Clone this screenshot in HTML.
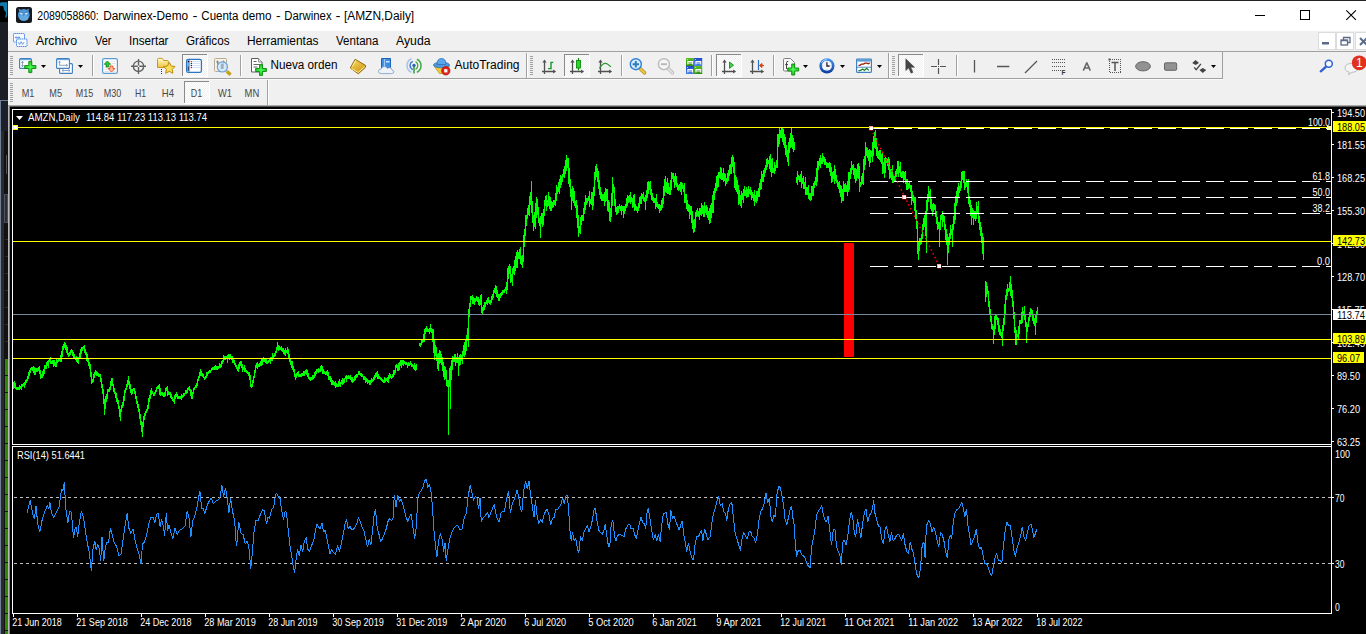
<!DOCTYPE html>
<html><head><meta charset="utf-8"><title>MT4</title>
<style>
*{box-sizing:border-box;margin:0;padding:0}
html,body{width:1366px;height:634px;overflow:hidden;background:#000}
body{position:relative;font-family:"Liberation Sans",sans-serif;font-size:12px;color:#000}
.abs{position:absolute}
#left{left:0;top:0;width:8px;height:634px;background:#1b1c1f}
#title{left:8px;top:0;width:1358px;height:31px;background:#fff;border-top:1px solid #222}
#menu{left:8px;top:31px;width:1358px;height:21px;background:#f0f0f0;border-bottom:1px solid #a0a0a0}
#tb{left:8px;top:52px;width:1358px;height:54px;background:#f0f0f0}
.t{position:absolute;white-space:nowrap;line-height:1}
.mi{position:absolute;top:35px;font-size:12.5px;line-height:1;white-space:nowrap;transform-origin:0 0}
.tf{position:absolute;top:89px;font-size:9.5px;color:#555;line-height:1;white-space:nowrap}
svg{position:absolute;left:0;top:0}
</style></head><body>
<div id="left" class="abs"></div>
<div id="title" class="abs"></div>
<div id="menu" class="abs"></div>
<div id="tb" class="abs"></div>
<svg width="1366" height="110" viewBox="0 0 1366 110" font-family="Liberation Sans, sans-serif">
<defs><radialGradient id="pgr" cx=".5" cy=".5" r=".6"><stop offset="0" stop-color="#50ff58"/><stop offset="1" stop-color="#12b81c"/></radialGradient><pattern id="chk" width="2" height="2" patternUnits="userSpaceOnUse"><rect width="2" height="2" fill="#f0f0f0"/><rect width="1" height="1" fill="#fff"/><rect x="1" y="1" width="1" height="1" fill="#fff"/></pattern></defs>
<rect x="16" y="7" width="16" height="16" rx="2.5" fill="#16181d"/>
<path d="M18.600 8.600l3 1.600l-2.400 2.600zM29 8.600l-3 1.600l2.400 2.600z" fill="#4a92d4"/><ellipse cx="23.800" cy="15" rx="5.900" ry="6" fill="#4a96d8"/><ellipse cx="23.800" cy="17.600" rx="4.200" ry="3.200" fill="#74b4e6" opacity=".65"/>
<ellipse cx="21.300" cy="13.400" rx="1.600" ry=".9" fill="#e8f2fb" transform="rotate(22 21.300 13.400)"/><ellipse cx="26.300" cy="13.400" rx="1.600" ry=".9" fill="#e8f2fb" transform="rotate(-22 26.300 13.400)"/><path d="M23.100 14.600h1.400l-.7 1.600z" fill="#2d6aa8"/><path d="M19.500 11.800l3.300 1.300M28.100 11.800l-3.300 1.300" stroke="#2d6aa8" stroke-width=".8"/>
<text x="37.3" y="20" font-size="12.5" fill="#000" font-weight="normal" text-anchor="start" textLength="61.5" lengthAdjust="spacingAndGlyphs">2089058860:</text>
<text x="103.2" y="20" font-size="12.5" fill="#000" font-weight="normal" text-anchor="start" textLength="85" lengthAdjust="spacingAndGlyphs">Darwinex-Demo</text>
<text x="192.5" y="20" font-size="12.5" fill="#000" font-weight="normal" text-anchor="start" textLength="5" lengthAdjust="spacingAndGlyphs">-</text>
<text x="201.3" y="20" font-size="12.5" fill="#000" font-weight="normal" text-anchor="start" textLength="37.2" lengthAdjust="spacingAndGlyphs">Cuenta</text>
<text x="242.3" y="20" font-size="12.5" fill="#000" font-weight="normal" text-anchor="start" textLength="29.3" lengthAdjust="spacingAndGlyphs">demo</text>
<text x="276" y="20" font-size="12.5" fill="#000" font-weight="normal" text-anchor="start" textLength="4.5" lengthAdjust="spacingAndGlyphs">-</text>
<text x="284.2" y="20" font-size="12.5" fill="#000" font-weight="normal" text-anchor="start" textLength="47.4" lengthAdjust="spacingAndGlyphs">Darwinex</text>
<text x="335.4" y="20" font-size="12.5" fill="#000" font-weight="normal" text-anchor="start" textLength="5" lengthAdjust="spacingAndGlyphs">-</text>
<text x="343.9" y="20" font-size="12.5" fill="#000" font-weight="normal" text-anchor="start" textLength="70.3" lengthAdjust="spacingAndGlyphs">[AMZN,Daily]</text>
<g stroke="#000" stroke-width="1" fill="none" shape-rendering="crispEdges"><path d="M1255 15.500h10"/><rect x="1300.500" y="10.500" width="9" height="9"/></g>
<path d="M1346.300 10.300l9.600 9.600M1355.900 10.300l-9.600 9.600" stroke="#000" stroke-width="1.1" fill="none"/>
<g fill="#f8fbff" stroke="#4a86e8" stroke-width="1" stroke-dasharray="1.600 .5"><rect x="13.500" y="33.500" width="11" height="8.500" rx=".8"/><rect x="16.500" y="39" width="10.500" height="7.500" rx=".8"/></g><path d="M15.300 37.500h4.500M16.500 36.300l-1.300 1.200l1.300 1.200M18.600 36.300l1.300 1.200l-1.300 1.200M18.300 42.300l1.300 2.200l1.500-2.800l1.500 2.800l1.400-2.400" stroke="#4a86e8" stroke-width=".8" fill="none"/>
<text x="36" y="45" font-size="12.5" fill="#000" font-weight="normal" text-anchor="start" textLength="41" lengthAdjust="spacingAndGlyphs">Archivo</text>
<text x="95" y="45" font-size="12.5" fill="#000" font-weight="normal" text-anchor="start" textLength="16.5" lengthAdjust="spacingAndGlyphs">Ver</text>
<text x="129" y="45" font-size="12.5" fill="#000" font-weight="normal" text-anchor="start" textLength="39.5" lengthAdjust="spacingAndGlyphs">Insertar</text>
<text x="186" y="45" font-size="12.5" fill="#000" font-weight="normal" text-anchor="start" textLength="43.5" lengthAdjust="spacingAndGlyphs">Gráficos</text>
<text x="247" y="45" font-size="12.5" fill="#000" font-weight="normal" text-anchor="start" textLength="71.5" lengthAdjust="spacingAndGlyphs">Herramientas</text>
<text x="336" y="45" font-size="12.5" fill="#000" font-weight="normal" text-anchor="start" textLength="42.5" lengthAdjust="spacingAndGlyphs">Ventana</text>
<text x="396" y="45" font-size="12.5" fill="#000" font-weight="normal" text-anchor="start" textLength="34.5" lengthAdjust="spacingAndGlyphs">Ayuda</text>
<rect x="1318.5" y="32.500" width="17" height="17" fill="#fff" stroke="#dcdcdc"/>
<rect x="1336.5" y="32.500" width="17" height="17" fill="#fff" stroke="#dcdcdc"/>
<rect x="1355.5" y="32.500" width="17" height="17" fill="#fff" stroke="#dcdcdc"/>
<rect x="1322" y="42" width="7" height="2.500" fill="#5b6b85"/>
<g stroke="#5b6b85" fill="none" stroke-width="1.3"><path d="M1343.500 40v-2.500h6.500v5h-2.500"/><rect x="1341" y="40" width="6.500" height="5" fill="#fff"/><path d="M1341 40.600h6.500"/></g>
<path d="M1360 38l7 7M1367 38l-7 7" stroke="#5b6b85" stroke-width="2" fill="none"/>
<rect x="8" y="78" width="1215" height="1" fill="#a0a0a0"/><rect x="8" y="79" width="1215" height="1" fill="#fbfbfb"/>
<rect x="1222" y="52" width="1" height="27" fill="#a0a0a0"/>
<rect x="10" y="56" width="3" height="1" fill="#a0a0a0"/><rect x="10" y="58" width="3" height="1" fill="#a0a0a0"/><rect x="10" y="60" width="3" height="1" fill="#a0a0a0"/><rect x="10" y="62" width="3" height="1" fill="#a0a0a0"/><rect x="10" y="64" width="3" height="1" fill="#a0a0a0"/><rect x="10" y="66" width="3" height="1" fill="#a0a0a0"/><rect x="10" y="68" width="3" height="1" fill="#a0a0a0"/><rect x="10" y="70" width="3" height="1" fill="#a0a0a0"/><rect x="10" y="72" width="3" height="1" fill="#a0a0a0"/><rect x="10" y="74" width="3" height="1" fill="#a0a0a0"/>
<rect x="10" y="83" width="3" height="1" fill="#a0a0a0"/><rect x="10" y="85" width="3" height="1" fill="#a0a0a0"/><rect x="10" y="87" width="3" height="1" fill="#a0a0a0"/><rect x="10" y="89" width="3" height="1" fill="#a0a0a0"/><rect x="10" y="91" width="3" height="1" fill="#a0a0a0"/><rect x="10" y="93" width="3" height="1" fill="#a0a0a0"/><rect x="10" y="95" width="3" height="1" fill="#a0a0a0"/><rect x="10" y="97" width="3" height="1" fill="#a0a0a0"/><rect x="10" y="99" width="3" height="1" fill="#a0a0a0"/><rect x="10" y="101" width="3" height="1" fill="#a0a0a0"/>
<rect x="19.600" y="58.600" width="11.800" height="9.800" rx="1" fill="#fff" stroke="#3d7fc1" stroke-width="1.100"/><rect x="20" y="59" width="11" height="1.200" fill="#6aa6e0"/><path d="M22.500 61.300v5.400M21.300 62.800l1.200-1.500l1.200 1.500M21.300 65.200l1.200 1.500l1.200-1.500" stroke="#7d9cbc" stroke-width=".9" fill="none"/>
<path d="M28.8 61.4h3.0v4.1h4.1v3.0h-4.1v4.1h-3.0v-4.1h-4.1v-3.0h4.1z" fill="url(#pgr)" stroke="#0b8a0b" stroke-width=".9" stroke-linejoin="round"/>
<path d="M41 65h5l-2.5 3z" fill="#000"/>
<rect x="59.600" y="63.600" width="12.800" height="9.800" rx="1" fill="#fff" stroke="#3d7fc1" stroke-width="1.100"/><path d="M62 70.500h8M63.500 69.300l-1.500 1.200l1.500 1.200M68.500 69.300l1.500 1.200l-1.500 1.200" stroke="#7d9cbc" stroke-width=".9" fill="none"/>
<rect x="56.600" y="58.600" width="12.800" height="9.800" rx="1" fill="#fff" stroke="#3d7fc1" stroke-width="1.100"/><rect x="57" y="59" width="12" height="1.200" fill="#6aa6e0"/><path d="M59.500 61.300v4M58.300 62.600l1.200-1.400l1.200 1.400M59.500 65.300h8M66 64.100l1.500 1.200l-1.500 1.200" stroke="#7d9cbc" stroke-width=".9" fill="none"/>
<path d="M78 65h5l-2.5 3z" fill="#000"/>
<rect x="92" y="55" width="1" height="21" fill="#a0a0a0"/><rect x="93" y="55" width="1" height="21" fill="#fff"/>
<rect x="102.600" y="58.600" width="14.800" height="14.800" rx="1.600" fill="#fff" stroke="#5b9bd5" stroke-width="1.200"/><path d="M104.500 61.500h3M111.500 61.500h1.500M114 61.500h1.500M111.500 63.500h4M104.500 67.500h3M104.500 69.500h3M104.500 71.500h5M113.500 71.500h2" stroke="#d4d8dc" stroke-width=".8"/>
<path d="M107.400 61l3.300 3.300h-1.900v2.700h-2.800v-2.700h-1.900z" fill="#2cc436" stroke="#0a8412" stroke-width=".7"/><path d="M111.500 72l3.400-3.400h-1.900v-2.600h-3v2.600h-1.900z" fill="#ffc0a8" stroke="#e04a18" stroke-width=".9"/>
<g stroke="#626262" stroke-width="1.400" fill="none"><circle cx="138.500" cy="66.300" r="5.200"/><path d="M131 66.300h6.700M139.300 66.300h6.700M138.500 59v6.500M138.500 67.100v6.900"/></g>
<defs><linearGradient id="fg" x1="0" y1="0" x2="0" y2="1"><stop offset="0" stop-color="#fffbd0"/><stop offset="1" stop-color="#f0c43c"/></linearGradient></defs><path d="M157.500 67.500v-8q0-1.200 1.200-1.200h3q1 0 1.400.9l.6 1.300h3.600q1 0 1 1v6z" fill="url(#fg)" stroke="#c8981c" stroke-width="1"/>
<path d="M169.300 62.300l1.800 3.700l4 .5l-2.900 2.800l.7 4l-3.600-1.900l-3.600 1.900l.7-4l-2.900-2.800l4-.5z" fill="#f8de58" stroke="#c08a10" stroke-width="1" stroke-linejoin="round"/>
<rect x="161" y="69" width="1" height="1" fill="#333"/><rect x="161" y="71" width="1" height="1" fill="#333"/><rect x="161" y="73" width="1" height="1" fill="#333"/>
<rect x="182" y="54" width="26" height="23" fill="url(#chk)" shape-rendering="crispEdges"/><rect x="182" y="54" width="26" height="1" fill="#8a8a8a"/><rect x="182" y="54" width="1" height="23" fill="#8a8a8a"/><rect x="182" y="76" width="26" height="1" fill="#fff"/><rect x="207" y="54" width="1" height="23" fill="#fff"/>
<rect x="186.600" y="59.400" width="14.800" height="13" rx="1.600" fill="#fff" stroke="#2f74c0" stroke-width="1.300"/><rect x="187.200" y="60" width="2.600" height="11.800" fill="#6aa6e6"/><rect x="187.800" y="66.500" width="1.200" height="4.300" fill="#39506c"/><rect x="187.900" y="61" width="1.200" height="1.200" fill="#000"/>
<path d="M191.500 61.500h9M191.500 63.500h9M191.500 65.500h9M191.500 67.500h9" stroke="#d0dcfa" stroke-width=".9"/><rect x="190.700" y="61" width="1.300" height="1.200" fill="#f01818"/><rect x="190.700" y="63" width="1.300" height="1.200" fill="#1c3a1c"/><rect x="190.700" y="65" width="1.300" height="1.200" fill="#1c3a1c"/><rect x="190.700" y="67" width="1.300" height="1.200" fill="#f01818"/>
<rect x="214.500" y="58.500" width="12" height="13" rx="1" fill="#f6f2ea" stroke="#b8ab90"/><path d="M217.500 60.500v6M223.500 60.500v6M216 62h3M222 62h3" stroke="#777" stroke-width=".8"/>
<path d="M226.800 71.300l3.800 3.400" stroke="#c9a114" stroke-width="3.400"/><circle cx="222.400" cy="66.900" r="5.100" fill="#d4e6f8" fill-opacity=".85" stroke="#6ea4dc" stroke-width="1.200"/><rect x="220.800" y="63.600" width="2.800" height="5.400" fill="#8fa4bc" opacity=".85"/>
<rect x="240" y="55" width="1" height="21" fill="#a0a0a0"/><rect x="241" y="55" width="1" height="21" fill="#fff"/>
<path d="M251.500 58.500h7l3.500 3.500v10h-10.500z" fill="#fff" stroke="#5c5c5c"/><path d="M258.500 58.500v3.500h3.500" fill="#e8e8e8" stroke="#7a7a7a" stroke-width=".8"/><path d="M253.500 61.500h3M253.500 64.500h6M253.500 67h4" stroke="#666" stroke-width="1"/>
<path d="M259.5 64.6h3.0v3.9000000000000004h3.9000000000000004v3.0h-3.9000000000000004v3.9000000000000004h-3.0v-3.9000000000000004h-3.9000000000000004v-3.0h3.9000000000000004z" fill="url(#pgr)" stroke="#0b8a0b" stroke-width=".9" stroke-linejoin="round"/>
<text x="270.5" y="69" font-size="12.5" fill="#000" font-weight="normal" text-anchor="start" textLength="67" lengthAdjust="spacingAndGlyphs">Nueva orden</text>
<defs><linearGradient id="bk" x1="0" y1="0" x2=".6" y2="1"><stop offset="0" stop-color="#fae060"/><stop offset="1" stop-color="#d09818"/></linearGradient></defs><path d="M350.300 68l4.800-8.700l10.600 6.200l-.6 2.200l-6.800 6.100z" fill="url(#bk)" stroke="#94660c" stroke-width="1" stroke-linejoin="round"/><path d="M351.500 68.600l6.800 3.800l6.300-5.700" fill="none" stroke="#fff0a8" stroke-width="1"/><path d="M352.300 66.500l3.300-5.800" stroke="#fff6c0" stroke-width=".9"/>
<path d="M381.500 58.500h9v9.500h-9z" fill="#3a8fe4" stroke="#1f62b8"/><path d="M384.500 59v8.500" stroke="#9cc8f4" stroke-width="1.200"/><rect x="386" y="61" width="3.500" height="1.500" fill="#cfe6fb"/>
<path d="M381.200 73.600q-2.800 0-2.800-2.300q0-2.200 2.700-2.300q.8-2.400 3.300-2.400q2.300 0 3.100 1.900q1-.9 2.400-.7q2.100 .3 2.100 2.300q1.800 .3 1.800 1.800q0 1.700-2.300 1.700z" fill="#eef3fa" stroke="#88a4cc" stroke-width=".9"/>
<g fill="none" stroke-linecap="round"><path d="M411 72a7.300 7.300 0 0 1 0-13" stroke="#a4c2ec" stroke-width="1.500"/><path d="M412.300 69.300a4.300 4.300 0 0 1 0-7.600" stroke="#3f78d0" stroke-width="1.500"/><path d="M417.500 59.500a7.300 7.300 0 0 1 0 12.500" stroke="#42a840" stroke-width="1.500"/><path d="M416 62a4.300 4.300 0 0 1 0 7" stroke="#42a840" stroke-width="1.300"/></g><circle cx="414" cy="65.500" r="1.700" fill="#2f62c0"/><path d="M414 66.500v7" stroke="#2e9a3a" stroke-width="1.500"/>
<path d="M434.500 66.500l5 7h6l4-7.500z" fill="#f2cc3a" stroke="#c09414" stroke-width=".8"/><ellipse cx="441.500" cy="65" rx="8" ry="2.800" fill="#4f9be0" stroke="#2f6fb8" stroke-width=".8"/><path d="M437 64.500q0-6 4.500-6t4.500 6z" fill="#5aa6ea" stroke="#2f6fb8" stroke-width=".8"/>
<circle cx="445.800" cy="70.800" r="4.200" fill="#e0261c" stroke="#a80c08" stroke-width=".7"/><rect x="444.200" y="69.200" width="3.200" height="3.200" fill="#fff"/>
<text x="454.5" y="69" font-size="12.5" fill="#000" font-weight="normal" text-anchor="start" textLength="65" lengthAdjust="spacingAndGlyphs">AutoTrading</text>
<rect x="526" y="53" width="1" height="25" fill="#a0a0a0"/><rect x="527" y="53" width="1" height="25" fill="#fff"/>
<rect x="530" y="56" width="3" height="1" fill="#a0a0a0"/><rect x="530" y="58" width="3" height="1" fill="#a0a0a0"/><rect x="530" y="60" width="3" height="1" fill="#a0a0a0"/><rect x="530" y="62" width="3" height="1" fill="#a0a0a0"/><rect x="530" y="64" width="3" height="1" fill="#a0a0a0"/><rect x="530" y="66" width="3" height="1" fill="#a0a0a0"/><rect x="530" y="68" width="3" height="1" fill="#a0a0a0"/><rect x="530" y="70" width="3" height="1" fill="#a0a0a0"/><rect x="530" y="72" width="3" height="1" fill="#a0a0a0"/><rect x="530" y="74" width="3" height="1" fill="#a0a0a0"/>
<path d="M544.5 61V74M542.0 71.5H554.5" stroke="#505050" stroke-width="1.300" fill="none"/><path d="M542.4 62.600L544.5 59.600L546.6 62.600zM553.1 69.4L556.1 71.5L553.1 73.6z" fill="#505050"/>
<path d="M551 61.800v7.400M551 62.400h2.300M551 68.600h-2.900" stroke="#0f9a20" stroke-width="1.400" fill="none"/>
<rect x="564" y="54" width="26" height="23" fill="url(#chk)" shape-rendering="crispEdges"/><rect x="564" y="54" width="26" height="1" fill="#8a8a8a"/><rect x="564" y="54" width="1" height="23" fill="#8a8a8a"/><rect x="564" y="76" width="26" height="1" fill="#fff"/><rect x="589" y="54" width="1" height="23" fill="#fff"/>
<path d="M572.5 61V74M570.0 71.5H582.5" stroke="#505050" stroke-width="1.300" fill="none"/><path d="M570.4 62.600L572.5 59.600L574.6 62.600zM581.1 69.4L584.1 71.5L581.1 73.6z" fill="#505050"/>
<path d="M578.500 58v12.500" stroke="#0b8f0b" stroke-width="1.200"/><rect x="576.500" y="60.500" width="4" height="7.500" fill="#2ad42a" stroke="#0b8f0b" stroke-width=".9"/>
<path d="M600.5 61V74M598.0 71.5H610.5" stroke="#505050" stroke-width="1.300" fill="none"/><path d="M598.4 62.600L600.5 59.600L602.6 62.600zM609.1 69.4L612.1 71.5L609.1 73.6z" fill="#505050"/>
<path d="M599.300 68.500q3-5.200 6-5.200q2.200 0 5.600 3.600" stroke="#2a9a30" stroke-width="1.200" fill="none"/>
<rect x="621" y="55" width="1" height="21" fill="#a0a0a0"/><rect x="622" y="55" width="1" height="21" fill="#fff"/>
<path d="M640 68.500l4.500 4.300" stroke="#b88a14" stroke-width="3.600" stroke-linecap="round"/><path d="M640 68.500l4.500 4.300" stroke="#ecc848" stroke-width="2" stroke-linecap="round"/><circle cx="635.800" cy="64.200" r="5.500" fill="#d6ecfc" stroke="#2b80d8" stroke-width="1.400"/><path d="M632.600 64.200h6.400M635.800 61v6.400" stroke="#2f7cb8" stroke-width="1.900"/>
<path d="M668 68.500l4.500 4.300" stroke="#b8b8b8" stroke-width="3.400" stroke-linecap="round"/><path d="M668 68.500l4.500 4.300" stroke="#e4e4e4" stroke-width="1.800" stroke-linecap="round"/><circle cx="663.900" cy="64.200" r="5.500" fill="#f6f6f6" stroke="#bcbcbc" stroke-width="1.400"/><path d="M660.800 64.200h6.200" stroke="#b8b8b8" stroke-width="1.900"/>
<defs><linearGradient id="tgrn" x1="0" y1="0" x2="0" y2="1"><stop offset="0" stop-color="#5cc024"/><stop offset="1" stop-color="#2e8a10"/></linearGradient><linearGradient id="tblu" x1="0" y1="0" x2="0" y2="1"><stop offset="0" stop-color="#1e48c8"/><stop offset="1" stop-color="#4a80e8"/></linearGradient></defs>
<rect x="686" y="58" width="8.100" height="8" fill="url(#tgrn)"/><path d="M687.8 64.5v-3h4.800v3M687.8 63h4.800" stroke="#f4f8f4" stroke-width="1.100" fill="none"/><rect x="687" y="59" width="1" height="1" fill="#e8f0e8" opacity=".8"/>
<rect x="694.1" y="58" width="8.100" height="8" fill="url(#tblu)"/><path d="M695.9 64.5v-3h4.800v3M695.9 63h4.800" stroke="#f4f8f4" stroke-width="1.100" fill="none"/><rect x="695.1" y="59" width="1" height="1" fill="#e8f0e8" opacity=".8"/>
<rect x="686" y="66" width="8.100" height="8" fill="url(#tblu)"/><path d="M687.8 72.5v-3h4.800v3M687.8 71h4.800" stroke="#f4f8f4" stroke-width="1.100" fill="none"/><rect x="687" y="67" width="1" height="1" fill="#e8f0e8" opacity=".8"/>
<rect x="694.1" y="66" width="8.100" height="8" fill="url(#tgrn)"/><path d="M695.9 72.5v-3h4.800v3M695.9 71h4.800" stroke="#f4f8f4" stroke-width="1.100" fill="none"/><rect x="695.1" y="67" width="1" height="1" fill="#e8f0e8" opacity=".8"/>
<rect x="711" y="55" width="1" height="21" fill="#a0a0a0"/><rect x="712" y="55" width="1" height="21" fill="#fff"/>
<rect x="716" y="54" width="26" height="23" fill="url(#chk)" shape-rendering="crispEdges"/><rect x="716" y="54" width="26" height="1" fill="#8a8a8a"/><rect x="716" y="54" width="1" height="23" fill="#8a8a8a"/><rect x="716" y="76" width="26" height="1" fill="#fff"/><rect x="741" y="54" width="1" height="23" fill="#fff"/>
<path d="M724.5 61V74M722.0 71.5H734.5" stroke="#505050" stroke-width="1.300" fill="none"/><path d="M722.4 62.600L724.5 59.600L726.6 62.600zM733.1 69.4L736.1 71.5L733.1 73.6z" fill="#505050"/>
<path d="M729.500 62l4 3.200l-4 3.200z" fill="#48d058" stroke="#1a9a28" stroke-width="1"/>
<path d="M752.5 61V74M750.0 71.5H762.5" stroke="#505050" stroke-width="1.300" fill="none"/><path d="M750.4 62.600L752.5 59.600L754.6 62.600zM761.1 69.4L764.1 71.5L761.1 73.6z" fill="#505050"/>
<path d="M758.500 60v10" stroke="#2a6fc0" stroke-width="1.200"/><path d="M764 65.500h-4M762 63.500l-2.500 2l2.500 2z" stroke="#d84010" stroke-width="1" fill="#d84010"/>
<rect x="773" y="55" width="1" height="21" fill="#a0a0a0"/><rect x="774" y="55" width="1" height="21" fill="#fff"/>
<path d="M783.500 59.500q0-1 1-1h6l4 4v7.500q0 1-1 1h-9q-1 0-1-1z" fill="#f8f8f8" stroke="#808080"/><path d="M788.300 61.300q-1.800-.2-1.800 1.600v6M785.200 64.600h2.800" stroke="#444" stroke-width="1" fill="none"/>
<path d="M791.7 64.0h3.0v4.0h4.0v3.0h-4.0v4.0h-3.0v-4.0h-4.0v-3.0h4.0z" fill="url(#pgr)" stroke="#0b8a0b" stroke-width=".9" stroke-linejoin="round"/>
<path d="M803 65h5l-2.5 3z" fill="#000"/>
<defs><linearGradient id="ck" x1="0" y1="0" x2="0" y2="1"><stop offset="0" stop-color="#4a98f4"/><stop offset="1" stop-color="#0c3c9c"/></linearGradient></defs><circle cx="826.900" cy="65.800" r="7.600" fill="url(#ck)"/><circle cx="826.900" cy="65.800" r="5" fill="#f4f8fc"/><path d="M826.900 62.200v3.800h2.700" stroke="#222" stroke-width="1.300" fill="none"/><path d="M826.900 61.300v.8M826.900 69.500v.8M822.400 65.800h.8M830.600 65.800h.8" stroke="#889" stroke-width=".7"/><path d="M821.500 62.500a6.300 6.300 0 0 1 5.400-3" stroke="#b4d4fc" stroke-width="1" fill="none"/>
<path d="M840 65h5l-2.5 3z" fill="#000"/>
<rect x="856.600" y="59.100" width="14.800" height="13.300" rx=".8" fill="#fff" stroke="#3d7fc1" stroke-width="1.200"/><rect x="857.200" y="59.600" width="13.600" height="2" fill="#5b9bd5"/><path d="M857 67.200h14" stroke="#3d7fc1" stroke-width=".9"/><path d="M858.500 65.300h1.500l1.500-1.200h2l1.500-1h1.800l1.500 .6l1.500-.9" stroke="#961c0c" stroke-width="1.300" fill="none"/><path d="M858.500 70.800l2.500-.6l1.600-1.200l1.800 1.400l2.200-2l2.300 2" stroke="#0c8424" stroke-width="1.200" fill="none"/>
<path d="M877 65h5l-2.5 3z" fill="#000"/>
<rect x="888" y="53" width="1" height="25" fill="#a0a0a0"/><rect x="889" y="53" width="1" height="25" fill="#fff"/>
<rect x="892" y="56" width="3" height="1" fill="#a0a0a0"/><rect x="892" y="58" width="3" height="1" fill="#a0a0a0"/><rect x="892" y="60" width="3" height="1" fill="#a0a0a0"/><rect x="892" y="62" width="3" height="1" fill="#a0a0a0"/><rect x="892" y="64" width="3" height="1" fill="#a0a0a0"/><rect x="892" y="66" width="3" height="1" fill="#a0a0a0"/><rect x="892" y="68" width="3" height="1" fill="#a0a0a0"/><rect x="892" y="70" width="3" height="1" fill="#a0a0a0"/><rect x="892" y="72" width="3" height="1" fill="#a0a0a0"/><rect x="892" y="74" width="3" height="1" fill="#a0a0a0"/>
<rect x="898" y="54" width="26" height="23" fill="url(#chk)" shape-rendering="crispEdges"/><rect x="898" y="54" width="26" height="1" fill="#8a8a8a"/><rect x="898" y="54" width="1" height="23" fill="#8a8a8a"/><rect x="898" y="76" width="26" height="1" fill="#fff"/><rect x="923" y="54" width="1" height="23" fill="#fff"/>
<path d="M905.800 58.800v11.800l2.900-2.600l2.300 5.200l2-.9l-2.300-5h3.900z" fill="#444" stroke="#444" stroke-width=".5" stroke-linejoin="round"/>
<path d="M931 66.500h6M940 66.500h6M938.500 59v6M938.500 68v6" stroke="#555" stroke-width="1.200" fill="none"/><rect x="938" y="66" width="1" height="1" fill="#555"/>
<rect x="956" y="55" width="1" height="21" fill="#a0a0a0"/><rect x="957" y="55" width="1" height="21" fill="#fff"/>
<path d="M974.500 60v12.500M997 66.500h12.300M1025 73l12-12" stroke="#555" stroke-width="1.300" fill="none"/>
<path d="M1052 59.500h13M1052 62.500h13M1052 66.500h13M1052 70.500h9" stroke="#555" stroke-width="1" stroke-dasharray="1 1" fill="none"/>
<text x="1061.5" y="75" font-size="6.5" fill="#333" font-weight="bold" text-anchor="start">F</text>
<path d="M1083.300 70.600l3.500-8l3.500 8M1084.600 67.900h4.400" stroke="#666" stroke-width="1.500" fill="none" stroke-linejoin="bevel"/>
<rect x="1109.500" y="59.500" width="11" height="13" fill="none" stroke="#555" stroke-dasharray="1 1" shape-rendering="crispEdges"/><path d="M1111.500 62.500h7M1115 62.500v8.500" stroke="#555" stroke-width="1.500"/><rect x="1108.500" y="58.500" width="2" height="2" fill="#555"/>
<ellipse cx="1143" cy="66.300" rx="7.400" ry="4.600" fill="#929292" stroke="#666" stroke-width="1"/>
<rect x="1164.500" y="62.800" width="12.200" height="7.500" rx="1.200" fill="#929292" stroke="#666" stroke-width="1"/>
<path d="M1195.600 60l3.400 3l-3.400 2l-3.400-2zM1202.800 73l-3.400-3l3.400-2l3.400 2z" fill="#444"/><path d="M1194.200 67.300l2 2.400l4.700-5.800" stroke="#444" stroke-width="1.300" fill="none"/>
<path d="M1211 65h5l-2.5 3z" fill="#000"/>
<path d="M1325.800 66.800l-5 4.500" stroke="#2f62d0" stroke-width="2.400" stroke-linecap="round"/><circle cx="1328.800" cy="63.800" r="3.500" fill="#f4f8ff" stroke="#2f62d0" stroke-width="1.500"/>
<path d="M1345 68q0-4.500 6.500-4.500t6.500 4.500q0 4-6 4.300l-3.500 2.500l.8-2.800q-4.300-.8-4.300-4z" fill="#f4f4f4" stroke="#b8b8b8" stroke-width=".9"/>
<circle cx="1359.200" cy="62.800" r="7.400" fill="#e0301e"/>
<text x="1359.4" y="67.3" font-size="12" fill="#fff" font-weight="normal" text-anchor="middle">1</text>
<rect x="184" y="81" width="26" height="23" fill="url(#chk)" shape-rendering="crispEdges"/><rect x="184" y="81" width="26" height="1" fill="#8a8a8a"/><rect x="184" y="81" width="1" height="23" fill="#8a8a8a"/><rect x="184" y="103" width="26" height="1" fill="#fff"/><rect x="209" y="81" width="1" height="23" fill="#fff"/>
<text x="21.7" y="97" font-size="10.4" fill="#484848" font-weight="normal" text-anchor="start" textLength="12.7" lengthAdjust="spacingAndGlyphs">M1</text>
<text x="49.3" y="97" font-size="10.4" fill="#484848" font-weight="normal" text-anchor="start" textLength="12.7" lengthAdjust="spacingAndGlyphs">M5</text>
<text x="75.7" y="97" font-size="10.4" fill="#484848" font-weight="normal" text-anchor="start" textLength="17.5" lengthAdjust="spacingAndGlyphs">M15</text>
<text x="103.8" y="97" font-size="10.4" fill="#484848" font-weight="normal" text-anchor="start" textLength="17.6" lengthAdjust="spacingAndGlyphs">M30</text>
<text x="134.9" y="97" font-size="10.4" fill="#484848" font-weight="normal" text-anchor="start" textLength="11.1" lengthAdjust="spacingAndGlyphs">H1</text>
<text x="161.8" y="97" font-size="10.4" fill="#484848" font-weight="normal" text-anchor="start" textLength="12.2" lengthAdjust="spacingAndGlyphs">H4</text>
<text x="190.8" y="97" font-size="10.4" fill="#484848" font-weight="normal" text-anchor="start" textLength="11.4" lengthAdjust="spacingAndGlyphs">D1</text>
<text x="218" y="97" font-size="10.4" fill="#484848" font-weight="normal" text-anchor="start" textLength="14" lengthAdjust="spacingAndGlyphs">W1</text>
<text x="244.6" y="97" font-size="10.4" fill="#484848" font-weight="normal" text-anchor="start" textLength="14.7" lengthAdjust="spacingAndGlyphs">MN</text>
<rect x="267" y="80" width="1" height="25" fill="#a0a0a0"/><rect x="268" y="80" width="1" height="25" fill="#fff"/>
</svg>
<svg id="chart" width="1366" height="634" viewBox="0 0 1366 634">
<g font-family="Liberation Sans, sans-serif" shape-rendering="crispEdges">
<rect x="0" y="0" width="8" height="22" fill="#000"/><path d="M0 3.200L1 2.200H7.300V12L6.800 17.500H5.200L6 12.500L4 10L3.300 6L0 5.800z" fill="#0f7cb0" shape-rendering="auto"/>
<rect x="0" y="22" width="8" height="78" fill="#1c1e25"/>
<rect x="0" y="100" width="8" height="534" fill="#121214"/><rect x="0" y="100" width="1.200" height="534" fill="#6f7f98"/><rect x="0" y="100" width="7.500" height="1.200" fill="#6f7f98"/><rect x="1.200" y="101.200" width="6.300" height="29.300" fill="#1d2029"/><rect x="1.200" y="130.500" width="3" height="503.500" fill="#2a2a2d"/>
<rect x="6.200" y="155" width="1" height="19" fill="#50545c"/><rect x="4.400" y="194.500" width="3" height="27.500" fill="#2a2d36" stroke="#5a5e68" stroke-width=".8"/>
<rect x="4.500" y="239" width="3" height="1" fill="#2c2e33"/>
<rect x="4.500" y="256" width="3" height="1" fill="#2c2e33"/>
<rect x="4.500" y="273" width="3" height="1" fill="#2c2e33"/>
<rect x="4.500" y="290" width="3" height="1" fill="#2c2e33"/>
<rect x="4.500" y="307" width="3" height="1" fill="#2c2e33"/>
<rect x="4.500" y="324" width="3" height="1" fill="#2c2e33"/>
<rect x="4.500" y="341" width="3" height="1" fill="#2c2e33"/>
<rect x="4.5" y="359" width="3" height="16" fill="#2e8a00"/>
<rect x="4.5" y="376" width="3" height="16" fill="#2e8a00"/>
<rect x="4.5" y="393" width="3" height="16" fill="#2e8a00"/>
<rect x="4.5" y="410" width="3" height="16" fill="#2e8a00"/>
<rect x="4.5" y="427" width="3" height="16" fill="#2e8a00"/>
<rect x="4.5" y="444" width="3" height="16" fill="#2e8a00"/>
<rect x="4.5" y="461" width="3" height="16" fill="#2e8a00"/>
<rect x="4.5" y="478" width="3" height="16" fill="#2e8a00"/>
<rect x="4.5" y="495" width="3" height="16" fill="#2e8a00"/>
<rect x="4.5" y="512" width="3" height="16" fill="#2e8a00"/>
<rect x="4.5" y="529" width="3" height="16" fill="#2e8a00"/>
<rect x="4.5" y="546" width="3" height="16" fill="#2e8a00"/>
<rect x="4.5" y="563" width="3" height="16" fill="#2e8a00"/>
<rect x="4.5" y="580" width="3" height="16" fill="#2e8a00"/>
<rect x="4.5" y="597" width="3" height="16" fill="#2e8a00"/>
<rect x="4.5" y="614" width="3" height="16" fill="#2e8a00"/>
<rect x="4.5" y="631" width="3" height="16" fill="#2e8a00"/>
<rect x="8" y="105" width="1358" height="529" fill="#000"/>
<rect x="8" y="105" width="1358" height="1" fill="#a8a8a8"/>
<rect x="8" y="106" width="1358" height="1" fill="#555"/>
<rect x="8" y="106" width="1" height="528" fill="#b8b8b8"/><rect x="9" y="106" width="1" height="528" fill="#808080"/>
<rect x="844" y="243" width="10" height="114" fill="#ff0000"/>
<path d="M13.5 382V389M14.5 381V388M15.5 383V389M16.5 387V390M17.5 387V390M18.5 387V390M19.5 385V390M20.5 386V389M21.5 384V390M22.5 384V387M23.5 383V386M24.5 382V388M25.5 380V385M26.5 379V383M27.5 376V381M28.5 372V379M29.5 370V376M30.5 368V373M31.5 367V370M32.5 367V371M33.5 366V373M34.5 367V375M35.5 368V375M36.5 368V372M37.5 368V372M38.5 367V371M39.5 366V374M40.5 370V379M41.5 374V378M42.5 371V378M43.5 369V376M44.5 365V374M45.5 365V369M46.5 362V369M47.5 361V366M48.5 360V368M49.5 359V362M50.5 357V364M51.5 361V364M52.5 360V364M53.5 360V367M54.5 360V366M55.5 362V367M56.5 359V367M57.5 360V363M58.5 358V362M59.5 358V361M60.5 355V362M61.5 351V362M62.5 346V357M63.5 344V350M64.5 342V348M65.5 343V350M66.5 345V353M67.5 347V355M68.5 353V357M69.5 352V356M70.5 350V355M71.5 349V353M72.5 350V356M73.5 352V359M74.5 354V359M75.5 357V360M76.5 356V362M77.5 357V363M78.5 357V364M79.5 353V359M80.5 349V359M81.5 347V354M82.5 347V351M83.5 346V349M84.5 345V353M85.5 349V355M86.5 352V361M87.5 354V362M88.5 358V366M89.5 362V369M90.5 364V377M91.5 372V384M92.5 379V383M93.5 374V382M94.5 372V378M95.5 370V375M96.5 371V376M97.5 372V376M98.5 373V377M99.5 374V377M100.5 374V382M101.5 378V388M102.5 384V394M103.5 389V404M104.5 399V415M105.5 396V409M106.5 394V402M107.5 389V399M108.5 389V392M109.5 387V392M110.5 381V390M111.5 378V386M112.5 378V386M113.5 384V392M114.5 388V394M115.5 392V398M116.5 393V402M117.5 398V404M118.5 400V409M119.5 406V417M120.5 409V421M121.5 405V412M122.5 402V408M123.5 396V406M124.5 390V401M125.5 388V393M126.5 384V390M127.5 380V387M128.5 376V385M129.5 381V389M130.5 384V393M131.5 389V395M132.5 389V394M133.5 388V391M134.5 388V394M135.5 391V399M136.5 396V404M137.5 401V408M138.5 404V412M139.5 409V419M140.5 414V425M141.5 421V432M142.5 422V437M143.5 416V427M144.5 413V420M145.5 411V416M146.5 409V413M147.5 405V411M148.5 398V409M149.5 395V402M150.5 390V399M151.5 388V395M152.5 391V394M153.5 393V396M154.5 392V396M155.5 390V394M156.5 387V392M157.5 386V389M158.5 385V389M159.5 384V395M160.5 388V396M161.5 392V395M162.5 392V396M163.5 393V397M164.5 392V397M165.5 388V396M166.5 387V391M167.5 386V396M168.5 391V395M169.5 392V395M170.5 392V398M171.5 394V399M172.5 397V401M173.5 399V402M174.5 395V404M175.5 394V399M176.5 392V397M177.5 394V399M178.5 396V399M179.5 396V399M180.5 396V399M181.5 394V400M182.5 395V398M183.5 393V397M184.5 393V396M185.5 390V394M186.5 390V394M187.5 388V393M188.5 387V390M189.5 386V391M190.5 389V396M191.5 390V399M192.5 392V399M193.5 388V394M194.5 387V390M195.5 385V388M196.5 383V388M197.5 379V386M198.5 376V381M199.5 372V378M200.5 369V376M201.5 371V376M202.5 373V377M203.5 374V378M204.5 377V380M205.5 376V379M206.5 372V378M207.5 372V376M208.5 371V374M209.5 370V373M210.5 370V373M211.5 368V371M212.5 367V370M213.5 367V370M214.5 366V370M215.5 365V370M216.5 366V370M217.5 366V370M218.5 366V369M219.5 363V368M220.5 364V368M221.5 361V367M222.5 360V364M223.5 355V362M224.5 356V360M225.5 356V360M226.5 356V359M227.5 355V363M228.5 354V359M229.5 354V360M230.5 354V359M231.5 356V360M232.5 356V363M233.5 358V363M234.5 360V365M235.5 363V367M236.5 365V369M237.5 367V371M238.5 364V372M239.5 362V369M240.5 361V366M241.5 361V368M242.5 364V372M243.5 367V370M244.5 365V372M245.5 368V372M246.5 370V373M247.5 371V374M248.5 372V376M249.5 372V380M250.5 375V387M251.5 384V388M252.5 380V387M253.5 376V383M254.5 370V378M255.5 365V373M256.5 363V368M257.5 362V369M258.5 364V367M259.5 363V367M260.5 361V366M261.5 358V366M262.5 359V365M263.5 357V362M264.5 359V362M265.5 359V363M266.5 359V364M267.5 361V364M268.5 360V363M269.5 359V362M270.5 357V364M271.5 357V361M272.5 353V361M273.5 355V359M274.5 353V357M275.5 351V356M276.5 347V353M277.5 342V350M278.5 345V351M279.5 346V350M280.5 347V350M281.5 346V351M282.5 348V352M283.5 348V354M284.5 350V355M285.5 348V356M286.5 350V353M287.5 347V354M288.5 349V359M289.5 354V362M290.5 358V365M291.5 361V368M292.5 361V370M293.5 366V372M294.5 369V377M295.5 374V380M296.5 373V378M297.5 372V376M298.5 371V377M299.5 374V377M300.5 374V377M301.5 373V377M302.5 373V376M303.5 371V376M304.5 371V376M305.5 370V374M306.5 369V375M307.5 370V377M308.5 373V379M309.5 377V380M310.5 377V381M311.5 377V380M312.5 375V380M313.5 375V379M314.5 372V378M315.5 371V376M316.5 369V374M317.5 369V372M318.5 368V373M319.5 369V372M320.5 366V372M321.5 365V371M322.5 366V374M323.5 369V374M324.5 371V374M325.5 372V375M326.5 371V375M327.5 370V376M328.5 372V380M329.5 376V380M330.5 376V382M331.5 378V385M332.5 380V385M333.5 381V385M334.5 382V386M335.5 381V388M336.5 383V387M337.5 384V387M338.5 381V387M339.5 379V386M340.5 382V387M341.5 380V384M342.5 378V385M343.5 379V384M344.5 378V383M345.5 376V379M346.5 375V382M347.5 376V379M348.5 375V379M349.5 376V379M350.5 375V380M351.5 377V382M352.5 377V383M353.5 379V382M354.5 376V381M355.5 375V380M356.5 374V378M357.5 374V377M358.5 371V375M359.5 371V375M360.5 373V376M361.5 373V377M362.5 374V377M363.5 376V380M364.5 376V380M365.5 377V383M366.5 378V382M367.5 379V384M368.5 380V383M369.5 380V385M370.5 380V385M371.5 378V383M372.5 379V382M373.5 377V381M374.5 375V380M375.5 373V378M376.5 372V377M377.5 371V379M378.5 374V379M379.5 376V379M380.5 377V380M381.5 378V381M382.5 379V382M383.5 380V383M384.5 377V383M385.5 378V382M386.5 378V381M387.5 377V382M388.5 375V383M389.5 373V379M390.5 374V378M391.5 376V379M392.5 374V378M393.5 370V377M394.5 370V375M395.5 365V373M396.5 364V368M397.5 365V371M398.5 363V371M399.5 362V370M400.5 360V366M401.5 360V368M402.5 360V365M403.5 360V366M404.5 361V364M405.5 362V365M406.5 362V365M407.5 363V368M408.5 362V366M409.5 363V366M410.5 361V365M411.5 363V367M412.5 364V367M413.5 365V369M414.5 363V370M415.5 365V371M416.5 364V370M419.5 343V346M420.5 343V347M421.5 339V345M422.5 339V343M423.5 334V342M424.5 329V342M425.5 328V334M426.5 326V332M427.5 328V332M428.5 329V332M429.5 328V334M430.5 324V332M431.5 328V333M432.5 329V342M433.5 329V353M434.5 340V360M435.5 345V356M436.5 347V361M437.5 354V369M438.5 353V371M439.5 350V364M440.5 351V363M441.5 354V365M442.5 357V371M443.5 362V377M444.5 366V380M445.5 367V379M446.5 370V386M447.5 380V387M448.5 380V435M449.5 368V387M450.5 366V409M451.5 360V380M452.5 356V370M453.5 357V362M454.5 354V362M455.5 354V366M456.5 357V363M457.5 353V363M458.5 357V376M459.5 355V366M460.5 354V365M461.5 355V361M462.5 351V364M463.5 345V356M464.5 342V357M465.5 340V355M466.5 335V351M467.5 328V341M468.5 309V347M469.5 303V317M470.5 296V307M471.5 296V300M472.5 295V304M473.5 297V304M474.5 298V305M475.5 298V302M476.5 296V301M477.5 297V302M478.5 297V305M479.5 299V306M480.5 295V305M481.5 294V313M482.5 307V315M483.5 305V311M484.5 302V310M485.5 302V307M486.5 300V304M487.5 298V305M488.5 297V303M489.5 300V304M490.5 300V305M491.5 296V303M492.5 294V300M493.5 290V298M494.5 288V293M495.5 285V294M496.5 286V297M497.5 290V298M498.5 294V301M499.5 294V301M500.5 293V298M501.5 292V296M502.5 290V295M503.5 290V293M504.5 289V293M505.5 287V291M506.5 282V294M507.5 268V290M508.5 266V279M509.5 264V274M510.5 266V283M511.5 274V282M512.5 268V286M513.5 266V274M514.5 260V275M515.5 256V271M516.5 252V268M517.5 250V268M518.5 252V259M519.5 249V259M520.5 247V264M521.5 256V265M522.5 255V268M523.5 235V262M524.5 229V247M525.5 215V236M526.5 215V226M527.5 208V219M528.5 205V215M529.5 196V216M530.5 192V205M531.5 181V213M532.5 201V223M533.5 215V231M534.5 212V227M535.5 203V229M536.5 197V218M537.5 199V215M538.5 207V223M539.5 218V226M540.5 216V238M541.5 213V224M542.5 213V227M543.5 209V225M544.5 200V216M545.5 196V206M546.5 195V211M547.5 200V207M548.5 192V206M549.5 196V209M550.5 197V211M551.5 201V211M552.5 202V208M553.5 200V207M554.5 200V205M555.5 193V206M556.5 185V201M557.5 187V194M558.5 182V192M559.5 179V194M560.5 175V188M561.5 176V185M562.5 174V182M563.5 169V177M564.5 166V178M565.5 160V174M566.5 155V171M567.5 158V168M568.5 158V184M569.5 168V187M570.5 179V197M571.5 189V210M572.5 186V201M573.5 188V203M574.5 191V206M575.5 201V208M576.5 200V218M577.5 205V228M578.5 215V237M579.5 226V233M580.5 217V234M581.5 215V225M582.5 215V221M583.5 208V221M584.5 202V214M585.5 195V210M586.5 198V205M587.5 198V203M588.5 196V201M589.5 191V207M590.5 199V204M591.5 192V205M592.5 192V210M593.5 187V206M594.5 172V196M595.5 166V180M596.5 164V177M597.5 168V182M598.5 171V189M599.5 180V195M600.5 187V199M601.5 192V201M602.5 194V201M603.5 194V201M604.5 192V206M605.5 188V202M606.5 189V201M607.5 189V211M608.5 200V212M609.5 202V221M610.5 208V222M611.5 193V217M612.5 177V206M613.5 184V193M614.5 187V206M615.5 199V212M616.5 207V215M617.5 206V214M618.5 206V213M619.5 204V209M620.5 206V211M621.5 205V215M622.5 206V211M623.5 206V218M624.5 206V214M625.5 204V211M626.5 198V208M627.5 195V206M628.5 196V203M629.5 195V202M630.5 192V204M631.5 197V202M632.5 198V208M633.5 195V207M634.5 194V211M635.5 204V210M636.5 206V211M637.5 207V213M638.5 203V211M639.5 197V208M640.5 196V204M641.5 193V204M642.5 194V199M643.5 192V201M644.5 197V202M645.5 195V210M646.5 190V201M647.5 182V198M648.5 181V194M649.5 182V190M650.5 181V195M651.5 189V200M652.5 193V201M653.5 197V203M654.5 198V203M655.5 198V209M656.5 194V207M657.5 202V208M658.5 204V209M659.5 204V213M660.5 205V211M661.5 200V210M662.5 198V208M663.5 186V204M664.5 179V196M665.5 176V192M666.5 182V193M667.5 178V194M668.5 183V194M669.5 187V195M670.5 180V195M671.5 172V190M672.5 173V179M673.5 173V182M674.5 176V188M675.5 173V185M676.5 176V187M677.5 183V190M678.5 185V191M679.5 184V190M680.5 182V192M681.5 182V195M682.5 183V189M683.5 185V192M684.5 183V203M685.5 194V203M686.5 194V209M687.5 200V211M688.5 204V212M689.5 205V219M690.5 206V215M691.5 206V223M692.5 211V229M693.5 220V233M694.5 219V232M695.5 212V228M696.5 210V217M697.5 208V216M698.5 211V217M699.5 208V220M700.5 208V215M701.5 203V216M702.5 205V214M703.5 206V217M704.5 202V217M705.5 206V213M706.5 205V215M707.5 207V218M708.5 211V220M709.5 208V224M710.5 205V223M711.5 203V218M712.5 195V213M713.5 191V213M714.5 188V200M715.5 183V193M716.5 176V191M717.5 175V188M718.5 172V187M719.5 172V178M720.5 167V179M721.5 168V180M722.5 173V180M723.5 168V182M724.5 173V181M725.5 174V186M726.5 178V184M727.5 173V182M728.5 170V181M729.5 165V176M730.5 164V174M731.5 157V174M732.5 155V167M733.5 157V173M734.5 162V188M735.5 175V190M736.5 177V192M737.5 180V194M738.5 185V205M739.5 190V204M740.5 195V206M741.5 191V208M742.5 193V200M743.5 189V203M744.5 186V196M745.5 190V196M746.5 187V198M747.5 189V197M748.5 186V197M749.5 189V194M750.5 187V195M751.5 190V200M752.5 192V198M753.5 194V201M754.5 190V206M755.5 195V202M756.5 191V203M757.5 191V201M758.5 188V197M759.5 183V197M760.5 179V190M761.5 171V189M762.5 174V182M763.5 170V182M764.5 168V177M765.5 165V173M766.5 159V170M767.5 158V167M768.5 160V164M769.5 156V169M770.5 154V172M771.5 159V177M772.5 158V173M773.5 168V173M774.5 162V174M775.5 165V171M776.5 160V168M777.5 134V168M778.5 134V147M779.5 127V144M780.5 130V138M781.5 127V138M782.5 128V142M783.5 129V145M784.5 134V148M785.5 137V155M786.5 145V157M787.5 150V162M788.5 142V166M789.5 138V153M790.5 133V148M791.5 128V147M792.5 135V149M793.5 138V152M794.5 142V150M796.5 177V183M797.5 171V185M798.5 175V180M799.5 176V182M800.5 174V182M801.5 171V188M802.5 178V184M803.5 176V189M804.5 182V189M805.5 177V195M806.5 187V195M807.5 187V195M808.5 185V199M809.5 193V200M810.5 193V201M811.5 186V200M812.5 186V196M813.5 183V196M814.5 181V188M815.5 177V185M816.5 168V186M817.5 161V182M818.5 161V170M819.5 158V166M820.5 155V168M821.5 158V164M822.5 153V164M823.5 156V162M824.5 157V165M825.5 159V165M826.5 162V168M827.5 163V168M828.5 163V168M829.5 162V172M830.5 163V176M831.5 167V183M832.5 172V182M833.5 171V179M834.5 165V184M835.5 169V181M836.5 175V183M837.5 180V187M838.5 182V189M839.5 181V193M840.5 185V197M841.5 186V203M842.5 189V201M843.5 181V201M844.5 184V192M845.5 183V192M846.5 185V192M847.5 181V196M848.5 172V192M849.5 172V190M850.5 168V179M851.5 161V174M852.5 165V170M853.5 164V175M854.5 168V179M855.5 168V183M856.5 169V181M857.5 164V178M858.5 163V179M859.5 166V192M860.5 182V187M861.5 176V185M862.5 173V184M863.5 159V185M864.5 156V170M865.5 142V165M866.5 147V156M867.5 148V158M868.5 150V161M869.5 149V167M870.5 150V163M871.5 151V157M872.5 142V162M873.5 136V156M874.5 132V148M875.5 130V149M876.5 138V156M877.5 147V158M878.5 151V159M879.5 150V160M880.5 150V162M881.5 154V164M882.5 153V174M883.5 162V173M884.5 158V178M885.5 157V173M886.5 158V163M887.5 159V166M888.5 157V170M889.5 159V179M890.5 169V178M891.5 169V180M892.5 165V183M893.5 175V183M894.5 176V182M895.5 171V181M896.5 169V177M897.5 161V174M898.5 161V177M899.5 166V173M900.5 162V177M901.5 172V178M902.5 171V178M903.5 171V183M904.5 172V180M905.5 171V184M906.5 179V190M907.5 179V190M908.5 183V189M909.5 182V188M910.5 185V192M911.5 185V205M912.5 191V201M913.5 195V203M914.5 197V211M915.5 197V219M916.5 210V229M917.5 221V254M918.5 241V260M919.5 238V251M920.5 238V245M921.5 234V244M922.5 224V239M923.5 218V230M924.5 215V227M925.5 211V236M926.5 200V253M927.5 194V211M928.5 186V202M929.5 191V197M930.5 189V209M931.5 199V211M932.5 204V216M933.5 203V212M934.5 204V210M935.5 205V217M936.5 211V224M937.5 217V230M938.5 222V229M939.5 222V247M940.5 215V230M941.5 214V220M942.5 211V227M943.5 215V222M944.5 216V230M945.5 224V240M946.5 229V245M947.5 234V265M948.5 237V253M949.5 233V245M950.5 225V239M951.5 229V235M952.5 224V247M953.5 216V230M954.5 203V224M955.5 196V220M956.5 191V206M957.5 187V203M958.5 183V198M959.5 186V193M960.5 181V191M961.5 172V188M962.5 171V180M963.5 171V183M964.5 171V190M965.5 182V188M966.5 179V187M967.5 181V193M968.5 179V204M969.5 196V207M970.5 200V216M971.5 205V225M972.5 208V218M973.5 210V225M974.5 211V219M975.5 211V221M976.5 202V219M977.5 206V214M978.5 201V223M979.5 216V230M980.5 222V236M981.5 227V243M982.5 233V254M983.5 237V260M985.5 281V302M986.5 282V297M987.5 286V294M988.5 291V307M989.5 301V314M990.5 309V322M991.5 316V329M992.5 324V330M993.5 326V344M994.5 316V335M995.5 314V329M996.5 314V320M997.5 317V325M998.5 318V332M999.5 325V335M1000.5 329V336M1001.5 332V338M1002.5 325V346M1003.5 318V331M1004.5 304V325M1005.5 295V315M1006.5 289V300M1007.5 284V296M1008.5 288V292M1009.5 282V291M1010.5 276V296M1011.5 284V298M1012.5 290V307M1013.5 301V319M1014.5 312V333M1015.5 327V345M1016.5 330V345M1017.5 334V337M1018.5 326V339M1019.5 320V334M1020.5 320V324M1021.5 312V324M1022.5 307V323M1023.5 311V316M1024.5 306V320M1025.5 314V327M1026.5 322V343M1027.5 324V332M1028.5 317V327M1029.5 312V321M1030.5 308V317M1031.5 309V315M1032.5 310V321M1033.5 315V324M1034.5 318V326M1035.5 314V335M1036.5 311V323M1037.5 307V315" stroke="#00ff00" stroke-width="1" fill="none" shape-rendering="crispEdges"/>
<rect x="13" y="127" width="1318" height="1" fill="#ffff00"/>
<rect x="13" y="241" width="1318" height="1" fill="#ffff00"/>
<rect x="13" y="314" width="1318" height="1" fill="#778899"/>
<rect x="13" y="339" width="1318" height="1" fill="#ffff00"/>
<rect x="13" y="358" width="1318" height="1" fill="#ffff00"/>
<path d="M870 128.5H1331" stroke="#fff" stroke-width="1" stroke-dasharray="18 6" fill="none"/>
<path d="M870 181.5H1331" stroke="#fff" stroke-width="1" stroke-dasharray="18 6" fill="none"/>
<path d="M870 197.5H1331" stroke="#fff" stroke-width="1" stroke-dasharray="18 6" fill="none"/>
<path d="M870 213.5H1331" stroke="#fff" stroke-width="1" stroke-dasharray="18 6" fill="none"/>
<path d="M870 266.5H1331" stroke="#fff" stroke-width="1" stroke-dasharray="18 6" fill="none"/>
<path d="M871 129L939.500 266.500" stroke="#ff0000" stroke-width="1.400" stroke-dasharray="1.600 2.600" fill="none" shape-rendering="auto"/>
<rect x="869" y="126" width="4" height="4" fill="#fff" stroke="#ff0000" stroke-width="0.35"/>
<rect x="902" y="195" width="4" height="4" fill="#fff" stroke="#ff0000" stroke-width="0.35"/>
<rect x="937" y="264" width="4" height="4" fill="#fff" stroke="#ff0000" stroke-width="0.35"/>
<rect x="13" y="125" width="4" height="4" fill="#fff" stroke="#ffff00" stroke-width="1"/>
<rect x="1327" y="126" width="4" height="4" fill="#ffffa8"/>
<rect x="12" y="109" width="1320" height="1" fill="#fff"/>
<rect x="12" y="109" width="1" height="336" fill="#fff"/>
<rect x="12" y="444" width="1320" height="1" fill="#fff"/>
<rect x="12" y="446" width="1320" height="1" fill="#fff"/>
<rect x="12" y="446" width="1" height="168" fill="#fff"/>
<rect x="12" y="613" width="1320" height="1" fill="#fff"/>
<rect x="1331" y="109" width="1" height="505" fill="#fff"/>
<path d="M14 497.5H1331" stroke="#c0c0c0" stroke-width="1" stroke-dasharray="3 3" fill="none"/>
<path d="M14 563.5H1331" stroke="#c0c0c0" stroke-width="1" stroke-dasharray="3 3" fill="none"/>
</g>
<g font-family="Liberation Sans, sans-serif">
<path d="M27.0 513.1 L30.2 500.4 L33.0 515.3 L34.5 518.5 L36.0 505.7 L37.7 523.8 L39.8 532.3 L42.4 518.5 L45.1 511.0 L47.3 505.7 L48.8 508.9 L50.0 502.5 L51.5 513.1 L53.7 517.4 L56.4 512.1 L59.0 506.8 L61.5 489.7 L62.8 490.8 L64.3 482.3 L65.8 508.9 L67.9 522.7 L69.6 511.0 L71.3 512.1 L73.5 537.6 L74.9 529.1 L76.4 527.0 L77.7 536.6 L79.2 523.8 L81.3 511.0 L83.5 517.4 L85.6 532.3 L87.7 545.1 L89.2 551.5 L91.3 570.6 L93.0 549.3 L94.8 540.8 L96.2 550.4 L97.7 544.0 L99.4 549.3 L100.7 561.1 L102.0 536.6 L103.7 561.1 L105.4 547.2 L106.9 541.9 L108.4 543.0 L110.5 528.0 L112.2 534.4 L114.3 543.0 L116.5 546.1 L119.0 555.7 L121.2 553.6 L122.9 540.8 L125.0 525.9 L127.1 513.1 L128.8 528.0 L131.0 533.4 L133.1 529.1 L135.2 540.8 L137.3 549.3 L139.0 553.6 L141.0 564.3 L142.5 544.0 L144.6 541.9 L146.7 534.4 L148.8 523.8 L151.0 517.4 L153.1 517.4 L154.8 522.7 L156.5 514.2 L158.2 513.1 L160.1 527.0 L161.6 519.5 L163.3 525.9 L164.6 535.5 L166.3 513.1 L167.6 531.2 L168.9 524.9 L170.8 532.3 L172.9 538.7 L175.0 528.0 L177.2 534.4 L179.3 530.2 L182.1 529.1 L185.0 525.9 L187.2 511.0 L188.9 517.4 L191.0 536.6 L192.7 520.6 L194.8 516.3 L197.0 506.8 L198.5 498.2 L199.9 490.8 L201.7 508.9 L203.4 507.8 L204.8 514.2 L207.0 505.7 L209.1 501.4 L211.2 498.2 L213.4 503.6 L215.5 501.4 L217.6 500.4 L219.8 498.2 L221.9 485.5 L223.6 497.2 L225.5 487.6 L227.2 498.2 L228.9 513.1 L230.6 498.2 L232.5 511.0 L234.7 521.7 L236.4 546.1 L236.7 545.1 L238.8 521.7 L241.0 533.4 L243.1 534.4 L245.2 544.0 L247.4 540.8 L249.1 549.3 L250.8 568.5 L252.5 550.4 L254.2 530.2 L255.9 520.6 L258.0 520.6 L260.1 515.3 L262.3 509.9 L264.4 511.0 L266.5 523.8 L268.0 517.4 L269.5 518.5 L271.6 509.9 L273.8 506.8 L275.5 495.0 L276.7 492.9 L278.4 497.2 L279.7 496.1 L281.4 508.9 L283.6 519.5 L285.3 511.0 L286.5 513.1 L288.2 530.2 L289.9 545.1 L291.6 555.7 L293.3 566.4 L294.6 572.8 L296.3 557.9 L297.6 549.3 L299.3 555.7 L301.0 545.1 L302.7 551.5 L304.4 540.8 L306.1 537.6 L307.8 549.3 L309.5 551.5 L311.7 545.1 L313.8 540.8 L315.5 530.2 L316.8 523.8 L318.5 527.0 L320.2 529.1 L321.9 522.7 L323.6 532.3 L325.3 530.2 L327.0 538.7 L328.7 547.2 L330.0 553.6 L331.7 549.3 L333.4 552.5 L335.5 554.7 L337.6 545.1 L339.3 551.5 L341.5 543.0 L343.6 532.3 L345.3 522.7 L346.6 519.5 L348.3 529.1 L350.0 525.9 L351.7 530.2 L353.4 529.1 L355.1 527.0 L356.8 523.8 L358.5 517.4 L360.2 521.7 L361.9 527.0 L364.0 531.2 L365.7 538.7 L367.5 547.2 L369.2 538.7 L370.9 545.1 L372.6 530.2 L374.3 513.1 L375.5 508.9 L377.2 528.0 L379.0 534.4 L380.7 541.9 L382.4 538.7 L384.1 534.4 L386.2 529.1 L387.9 521.7 L389.6 518.5 L391.3 520.6 L393.0 518.5 L394.3 495.0 L396.0 506.8 L397.7 495.0 L399.4 501.4 L401.1 499.3 L402.8 504.6 L404.5 511.0 L406.2 517.4 L407.9 521.7 L409.6 516.3 L411.3 514.2 L413.0 528.0 L414.7 538.7 L416.4 525.9 L417.7 498.2 L419.4 492.9 L421.1 490.8 L422.8 487.6 L424.5 481.2 L426.2 479.1 L427.9 487.6 L429.6 484.4 L431.3 494.0 L432.6 508.9 L433.9 530.2 L435.2 543.0 L436.9 556.8 L438.6 540.8 L440.3 533.4 L442.0 538.7 L443.7 551.5 L445.0 543.0 L446.2 561.1 L447.9 549.3 L449.7 538.7 L451.8 532.3 L453.9 528.0 L456.0 525.9 L458.2 525.9 L460.0 530.2 L462.1 529.1 L464.3 517.4 L466.4 513.1 L468.1 496.1 L470.2 485.5 L471.9 492.9 L473.6 500.4 L475.3 496.1 L477.0 498.2 L478.7 508.9 L480.0 498.2 L481.3 521.7 L483.4 517.4 L485.6 515.3 L487.3 512.1 L489.0 517.4 L490.7 513.1 L492.4 508.9 L494.1 504.6 L495.8 513.1 L497.5 519.5 L499.2 521.7 L500.9 513.1 L502.6 511.0 L504.3 512.1 L506.0 502.5 L507.3 496.1 L508.6 490.8 L510.3 513.1 L512.0 504.6 L513.7 500.4 L515.4 496.1 L517.1 489.7 L518.8 497.2 L520.5 508.9 L521.8 512.1 L523.5 491.8 L525.6 481.2 L527.3 488.7 L529.0 481.2 L530.7 496.1 L532.4 506.8 L534.1 517.4 L535.4 500.4 L537.1 515.3 L538.8 523.8 L540.5 519.5 L542.2 522.7 L543.9 515.3 L545.6 511.0 L547.3 508.9 L549.0 515.3 L550.7 524.9 L552.4 518.5 L554.1 517.4 L555.8 508.9 L557.5 509.9 L559.2 506.8 L560.9 504.6 L562.6 498.2 L564.3 503.6 L566.0 496.1 L567.3 495.0 L568.6 508.9 L569.9 530.2 L571.2 540.8 L572.4 532.3 L574.1 540.8 L575.8 538.7 L577.5 549.3 L578.8 552.5 L580.5 536.6 L582.2 540.8 L583.9 532.3 L585.6 529.1 L587.3 524.9 L589.0 532.3 L590.7 527.0 L592.5 519.5 L594.2 508.9 L595.4 508.9 L597.1 521.7 L598.8 530.2 L600.5 532.3 L602.2 534.4 L604.0 530.2 L605.2 523.8 L606.9 536.6 L608.6 547.2 L609.9 545.1 L611.2 523.8 L612.9 520.6 L614.6 536.6 L615.9 540.8 L617.6 535.5 L619.7 534.4 L621.8 535.5 L624.0 536.6 L625.7 529.1 L627.4 525.9 L629.5 523.8 L631.2 529.1 L632.9 528.0 L634.6 534.4 L636.3 538.7 L638.0 530.2 L639.7 521.7 L641.0 517.4 L642.7 522.7 L644.4 523.8 L645.7 529.1 L647.0 513.1 L648.2 507.8 L649.9 518.5 L651.7 530.2 L653.4 539.8 L655.1 534.4 L656.8 540.8 L658.5 534.4 L660.2 541.9 L661.4 528.0 L663.2 514.2 L664.9 513.1 L666.1 512.1 L667.8 523.8 L669.5 530.2 L670.8 509.9 L672.5 518.5 L674.2 516.3 L675.9 521.7 L677.6 525.9 L679.3 530.2 L681.0 523.8 L682.3 520.6 L683.6 534.4 L685.0 540.8 L686.7 551.5 L688.4 543.0 L690.1 551.5 L691.8 557.9 L693.5 560.0 L695.2 543.0 L696.9 536.6 L698.6 536.6 L700.3 532.3 L701.6 530.2 L702.9 540.8 L704.6 529.1 L706.3 534.4 L708.0 539.8 L710.1 536.6 L711.8 523.8 L713.5 513.1 L715.2 508.9 L716.9 501.4 L718.6 496.1 L720.3 505.7 L722.1 503.6 L723.8 512.1 L725.5 513.1 L726.7 520.6 L728.4 508.9 L730.1 503.6 L731.8 502.5 L733.6 519.5 L735.3 534.4 L737.0 538.7 L738.7 545.1 L740.4 550.4 L742.1 538.7 L743.8 532.3 L745.5 536.6 L747.2 538.7 L748.9 532.3 L750.6 531.2 L752.3 536.6 L754.0 537.6 L755.7 543.0 L757.4 534.4 L759.1 519.5 L760.8 511.0 L762.5 508.9 L764.2 503.6 L765.9 492.9 L767.6 502.5 L769.3 498.2 L771.0 517.4 L772.3 521.7 L774.0 515.3 L775.3 517.4 L777.0 494.0 L778.7 486.5 L780.4 487.6 L782.1 496.1 L783.8 506.8 L785.1 519.5 L786.8 524.9 L788.5 517.4 L790.2 508.9 L791.5 505.7 L792.8 517.4 L794.0 523.8 L795.3 543.0 L796.6 556.8 L798.3 550.4 L800.0 550.4 L801.7 554.7 L803.4 555.7 L805.1 557.9 L806.8 563.2 L808.5 566.4 L810.2 567.4 L811.5 547.2 L813.2 538.7 L814.9 530.2 L816.6 515.3 L818.3 511.0 L820.0 508.9 L821.7 505.7 L823.4 515.3 L825.1 520.6 L826.4 521.7 L828.1 516.3 L829.8 530.2 L831.5 545.1 L833.2 530.2 L834.9 529.1 L836.6 547.2 L838.3 551.5 L840.0 555.7 L841.3 565.3 L842.6 543.0 L844.3 539.8 L846.0 545.1 L847.7 536.6 L849.4 521.7 L851.1 512.1 L852.8 517.4 L854.5 534.4 L855.8 536.6 L857.5 519.5 L859.2 528.0 L860.9 537.6 L862.6 523.8 L864.3 513.1 L866.0 508.9 L867.7 521.7 L869.4 515.3 L871.1 513.1 L872.4 508.9 L873.7 500.4 L874.9 513.1 L876.7 519.5 L878.4 525.9 L880.0 527.0 L881.7 538.7 L883.4 544.0 L885.1 529.1 L886.4 525.9 L888.1 534.4 L889.8 541.9 L891.5 532.3 L893.2 540.8 L894.9 538.7 L896.6 535.5 L898.3 534.4 L900.0 536.6 L901.7 540.8 L903.4 533.4 L905.1 545.1 L906.8 551.5 L908.5 553.6 L910.2 541.9 L911.9 549.3 L913.6 553.6 L915.3 566.4 L917.1 574.9 L918.8 578.1 L920.5 568.5 L922.2 545.1 L923.9 541.9 L925.1 557.9 L926.4 525.9 L928.6 520.6 L930.3 523.8 L932.0 532.3 L933.7 527.0 L935.4 532.3 L937.1 540.8 L938.8 547.2 L940.5 532.3 L942.2 534.4 L943.9 540.8 L945.6 551.5 L947.3 557.9 L949.0 538.7 L950.3 535.5 L951.6 538.7 L953.3 521.7 L955.0 513.1 L956.7 509.9 L958.4 508.9 L960.1 505.7 L961.8 502.5 L963.5 508.9 L964.8 517.4 L966.5 508.9 L967.7 523.8 L969.4 534.4 L971.1 545.1 L972.8 540.8 L974.5 536.6 L976.3 529.1 L978.0 543.0 L979.7 549.3 L981.4 547.2 L983.1 555.7 L984.8 564.3 L986.5 563.2 L988.2 567.4 L989.9 572.8 L991.6 576.0 L993.3 566.4 L995.0 557.9 L996.7 553.6 L998.4 561.1 L1000.1 560.0 L1001.8 563.2 L1003.5 545.1 L1005.2 530.2 L1006.9 521.7 L1008.6 525.9 L1010.3 524.9 L1012.0 536.6 L1013.7 549.3 L1015.4 556.8 L1017.1 547.2 L1018.8 543.0 L1020.5 536.6 L1022.2 527.0 L1024.0 536.6 L1025.7 540.8 L1027.4 532.3 L1029.1 525.9 L1030.8 523.8 L1032.5 530.2 L1033.7 537.6 L1035.5 533.4 L1036.7 529.1" stroke="#1e90ff" stroke-width="1" fill="none" stroke-linejoin="bevel" shape-rendering="crispEdges"/>
<rect x="1332" y="112" width="2" height="1" fill="#fff" shape-rendering="crispEdges"/>
<text x="1337" y="116.5" font-size="10" fill="#fff" text-anchor="start" textLength="28" lengthAdjust="spacingAndGlyphs">194.50</text>
<rect x="1332" y="144" width="2" height="1" fill="#fff" shape-rendering="crispEdges"/>
<text x="1337" y="148.5" font-size="10" fill="#fff" text-anchor="start" textLength="28" lengthAdjust="spacingAndGlyphs">181.55</text>
<rect x="1332" y="177" width="2" height="1" fill="#fff" shape-rendering="crispEdges"/>
<text x="1337" y="181.5" font-size="10" fill="#fff" text-anchor="start" textLength="28" lengthAdjust="spacingAndGlyphs">168.25</text>
<rect x="1332" y="210" width="2" height="1" fill="#fff" shape-rendering="crispEdges"/>
<text x="1337" y="214.5" font-size="10" fill="#fff" text-anchor="start" textLength="28" lengthAdjust="spacingAndGlyphs">155.30</text>
<rect x="1332" y="243" width="2" height="1" fill="#fff" shape-rendering="crispEdges"/>
<text x="1337" y="247.5" font-size="10" fill="#fff" text-anchor="start" textLength="28" lengthAdjust="spacingAndGlyphs">142.00</text>
<rect x="1332" y="276" width="2" height="1" fill="#fff" shape-rendering="crispEdges"/>
<text x="1337" y="280.5" font-size="10" fill="#fff" text-anchor="start" textLength="28" lengthAdjust="spacingAndGlyphs">128.70</text>
<rect x="1332" y="309" width="2" height="1" fill="#fff" shape-rendering="crispEdges"/>
<text x="1337" y="313.5" font-size="10" fill="#fff" text-anchor="start" textLength="28" lengthAdjust="spacingAndGlyphs">115.75</text>
<rect x="1332" y="342" width="2" height="1" fill="#fff" shape-rendering="crispEdges"/>
<text x="1337" y="346.5" font-size="10" fill="#fff" text-anchor="start" textLength="28" lengthAdjust="spacingAndGlyphs">102.45</text>
<rect x="1332" y="375" width="2" height="1" fill="#fff" shape-rendering="crispEdges"/>
<text x="1337" y="379.5" font-size="10" fill="#fff" text-anchor="start" textLength="23" lengthAdjust="spacingAndGlyphs">89.50</text>
<rect x="1332" y="408" width="2" height="1" fill="#fff" shape-rendering="crispEdges"/>
<text x="1337" y="412.5" font-size="10" fill="#fff" text-anchor="start" textLength="23" lengthAdjust="spacingAndGlyphs">76.20</text>
<rect x="1332" y="441" width="2" height="1" fill="#fff" shape-rendering="crispEdges"/>
<text x="1337" y="445.5" font-size="10" fill="#fff" text-anchor="start" textLength="23" lengthAdjust="spacingAndGlyphs">63.25</text>
<rect x="1333" y="121" width="33" height="11" fill="#ffff00" shape-rendering="crispEdges"/>
<text x="1337" y="131.0" font-size="10" fill="#000" text-anchor="start" textLength="28" lengthAdjust="spacingAndGlyphs">188.05</text>
<rect x="1333" y="235" width="33" height="11" fill="#ffff00" shape-rendering="crispEdges"/>
<text x="1337" y="245.0" font-size="10" fill="#000" text-anchor="start" textLength="28" lengthAdjust="spacingAndGlyphs">142.73</text>
<rect x="1333" y="309" width="33" height="11" fill="#fff" shape-rendering="crispEdges"/>
<text x="1337" y="318.6" font-size="10" fill="#000" text-anchor="start" textLength="28" lengthAdjust="spacingAndGlyphs">113.74</text>
<rect x="1333" y="333" width="33" height="11" fill="#ffff00" shape-rendering="crispEdges"/>
<text x="1337" y="343.0" font-size="10" fill="#000" text-anchor="start" textLength="28" lengthAdjust="spacingAndGlyphs">103.89</text>
<rect x="1333" y="352" width="31" height="11" fill="#ffff00" shape-rendering="crispEdges"/>
<text x="1337" y="362.0" font-size="10" fill="#000" text-anchor="start" textLength="23" lengthAdjust="spacingAndGlyphs">96.07</text>
<text x="1308" y="126" font-size="10" fill="#fff" text-anchor="start" textLength="22" lengthAdjust="spacingAndGlyphs">100.0</text>
<text x="1312.5" y="180" font-size="10" fill="#fff" text-anchor="start" textLength="17.5" lengthAdjust="spacingAndGlyphs">61.8</text>
<text x="1312.5" y="196" font-size="10" fill="#fff" text-anchor="start" textLength="17.5" lengthAdjust="spacingAndGlyphs">50.0</text>
<text x="1312.5" y="212" font-size="10" fill="#fff" text-anchor="start" textLength="17.5" lengthAdjust="spacingAndGlyphs">38.2</text>
<text x="1317" y="265" font-size="10" fill="#fff" text-anchor="start" textLength="13" lengthAdjust="spacingAndGlyphs">0.0</text>
<text x="1335" y="457.5" font-size="10" fill="#fff" text-anchor="start" textLength="15" lengthAdjust="spacingAndGlyphs">100</text>
<rect x="1332" y="497" width="2" height="1" fill="#fff" shape-rendering="crispEdges"/>
<text x="1335" y="501.5" font-size="10" fill="#fff" text-anchor="start" textLength="9.5" lengthAdjust="spacingAndGlyphs">70</text>
<rect x="1332" y="563" width="2" height="1" fill="#fff" shape-rendering="crispEdges"/>
<text x="1335" y="567.5" font-size="10" fill="#fff" text-anchor="start" textLength="9.5" lengthAdjust="spacingAndGlyphs">30</text>
<text x="1335" y="610.5" font-size="10" fill="#fff" text-anchor="start" textLength="4.8" lengthAdjust="spacingAndGlyphs">0</text>
<path d="M16 116h7l-3.5 4z" fill="#fff"/>
<text x="28" y="121" font-size="10" fill="#fff" text-anchor="start" textLength="52" lengthAdjust="spacingAndGlyphs">AMZN,Daily</text>
<text x="86" y="121" font-size="10" fill="#fff" text-anchor="start" textLength="121" lengthAdjust="spacingAndGlyphs">114.84 117.23 113.13 113.74</text>
<text x="17" y="459" font-size="10" fill="#fff" text-anchor="start" textLength="68" lengthAdjust="spacingAndGlyphs">RSI(14) 51.6441</text>
<rect x="13" y="614" width="1" height="3" fill="#fff" shape-rendering="crispEdges"/>
<text x="12.2" y="626" font-size="10" fill="#fff" text-anchor="start" textLength="49.599999999999994" lengthAdjust="spacingAndGlyphs">21 Jun 2018</text>
<rect x="77" y="614" width="1" height="3" fill="#fff" shape-rendering="crispEdges"/>
<text x="76.2" y="626" font-size="10" fill="#fff" text-anchor="start" textLength="51.599999999999994" lengthAdjust="spacingAndGlyphs">21 Sep 2018</text>
<rect x="141" y="614" width="1" height="3" fill="#fff" shape-rendering="crispEdges"/>
<text x="140.2" y="626" font-size="10" fill="#fff" text-anchor="start" textLength="51.3" lengthAdjust="spacingAndGlyphs">24 Dec 2018</text>
<rect x="205" y="614" width="1" height="3" fill="#fff" shape-rendering="crispEdges"/>
<text x="204.2" y="626" font-size="10" fill="#fff" text-anchor="start" textLength="51.599999999999994" lengthAdjust="spacingAndGlyphs">28 Mar 2019</text>
<rect x="269" y="614" width="1" height="3" fill="#fff" shape-rendering="crispEdges"/>
<text x="268.2" y="626" font-size="10" fill="#fff" text-anchor="start" textLength="49.3" lengthAdjust="spacingAndGlyphs">28 Jun 2019</text>
<rect x="333" y="614" width="1" height="3" fill="#fff" shape-rendering="crispEdges"/>
<text x="332.2" y="626" font-size="10" fill="#fff" text-anchor="start" textLength="51.599999999999994" lengthAdjust="spacingAndGlyphs">30 Sep 2019</text>
<rect x="397" y="614" width="1" height="3" fill="#fff" shape-rendering="crispEdges"/>
<text x="396.2" y="626" font-size="10" fill="#fff" text-anchor="start" textLength="51.0" lengthAdjust="spacingAndGlyphs">31 Dec 2019</text>
<rect x="461" y="614" width="1" height="3" fill="#fff" shape-rendering="crispEdges"/>
<text x="460.2" y="626" font-size="10" fill="#fff" text-anchor="start" textLength="45.9" lengthAdjust="spacingAndGlyphs">2 Apr 2020</text>
<rect x="525" y="614" width="1" height="3" fill="#fff" shape-rendering="crispEdges"/>
<text x="524.2" y="626" font-size="10" fill="#fff" text-anchor="start" textLength="41.9" lengthAdjust="spacingAndGlyphs">6 Jul 2020</text>
<rect x="589" y="614" width="1" height="3" fill="#fff" shape-rendering="crispEdges"/>
<text x="588.2" y="626" font-size="10" fill="#fff" text-anchor="start" textLength="45.599999999999994" lengthAdjust="spacingAndGlyphs">5 Oct 2020</text>
<rect x="653" y="614" width="1" height="3" fill="#fff" shape-rendering="crispEdges"/>
<text x="652.2" y="626" font-size="10" fill="#fff" text-anchor="start" textLength="44.599999999999994" lengthAdjust="spacingAndGlyphs">6 Jan 2021</text>
<rect x="717" y="614" width="1" height="3" fill="#fff" shape-rendering="crispEdges"/>
<text x="716.2" y="626" font-size="10" fill="#fff" text-anchor="start" textLength="45.199999999999996" lengthAdjust="spacingAndGlyphs">9 Apr 2021</text>
<rect x="781" y="614" width="1" height="3" fill="#fff" shape-rendering="crispEdges"/>
<text x="780.2" y="626" font-size="10" fill="#fff" text-anchor="start" textLength="45.9" lengthAdjust="spacingAndGlyphs">12 Jul 2021</text>
<rect x="845" y="614" width="1" height="3" fill="#fff" shape-rendering="crispEdges"/>
<text x="844.2" y="626" font-size="10" fill="#fff" text-anchor="start" textLength="50.3" lengthAdjust="spacingAndGlyphs">11 Oct 2021</text>
<rect x="909" y="614" width="1" height="3" fill="#fff" shape-rendering="crispEdges"/>
<text x="908.2" y="626" font-size="10" fill="#fff" text-anchor="start" textLength="50.0" lengthAdjust="spacingAndGlyphs">11 Jan 2022</text>
<rect x="973" y="614" width="1" height="3" fill="#fff" shape-rendering="crispEdges"/>
<text x="972.2" y="626" font-size="10" fill="#fff" text-anchor="start" textLength="50.3" lengthAdjust="spacingAndGlyphs">13 Apr 2022</text>
<rect x="1037" y="614" width="1" height="3" fill="#fff" shape-rendering="crispEdges"/>
<text x="1036.2" y="626" font-size="10" fill="#fff" text-anchor="start" textLength="46.3" lengthAdjust="spacingAndGlyphs">18 Jul 2022</text>
</g>
</svg>
</body></html>
